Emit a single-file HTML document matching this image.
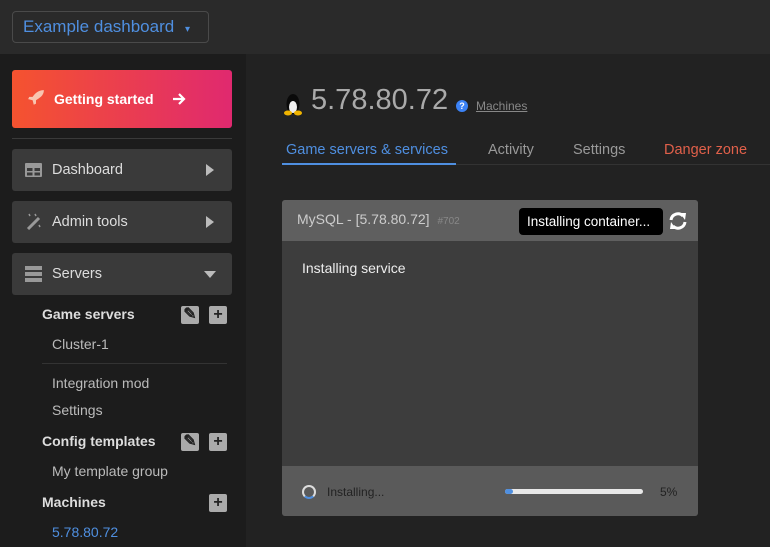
<!DOCTYPE html>
<html><head><style>
*{box-sizing:border-box;margin:0;padding:0}
body{width:770px;height:547px;overflow:hidden;background:#222;font-family:"Liberation Sans",sans-serif;position:relative;color:#ddd}
.abs{position:absolute}
.top{left:0;top:0;width:770px;height:54px;background:#2a2a2a}
.dd{left:12px;top:11px;width:197px;height:32px;border:1px solid #4a4a4a;border-radius:4px;color:#4f8fe0;font-size:17px;line-height:30px;padding-left:10px}
.side{left:0;top:54px;width:246px;height:493px;background:#1c1c1c}
.gs{left:12px;top:70px;width:220px;height:58px;border-radius:3px;background:linear-gradient(90deg,#f5532f,#e0296f);color:#fff;font-weight:bold;font-size:14px;line-height:58px;padding-left:42px}
.hr{left:12px;top:138px;width:220px;height:1px;background:#3a3a3a}
.nav{left:12px;width:220px;height:42px;background:#3a3a3a;border-radius:3px;font-size:14.5px;color:#ddd;line-height:42px;padding-left:40px}
.tri{position:absolute;right:18px;top:15px;width:0;height:0;border-top:6px solid transparent;border-bottom:6px solid transparent;border-left:8px solid #bbb}
.trid{position:absolute;right:16px;top:18px;border-left:6px solid transparent;border-right:6px solid transparent;border-top:7px solid #bbb}
.h{left:42px;font-weight:bold;font-size:14px;color:#ddd}
.i{left:52px;font-size:14px;color:#bbb}
.btn{width:18px;height:18px;background:#aaa;border-radius:2px;color:#222;font-weight:bold;text-align:center;line-height:18px;font-size:16px}
.tab{top:142px;font-size:14.5px;color:#999}
</style></head><body>
<div class="abs top"></div>
<div class="abs dd">Example dashboard <span style="font-size:10px;margin-left:6px">▾</span></div>
<div class="abs side"></div>
<div class="abs gs">Getting started</div>
<svg class="abs" style="left:172px;top:92px" width="14" height="14" viewBox="0 0 14 14"><path d="M1 7H12M7 2L12 7 7 12" stroke="#fff" stroke-width="2.2" fill="none"/></svg>
<svg class="abs" style="left:27px;top:89px" width="18" height="18" viewBox="0 0 16 16"><path d="M15 1C10 1 7 4 5 7L2 7 1 9 5 10 6 14 8 13 8 10C11 8 15 6 15 1Z" fill="#f8c5b0"/></svg>
<div class="abs hr"></div>
<div class="abs nav" style="top:149px">Dashboard<div class="tri"></div></div>
<svg class="abs" style="left:25px;top:163px" width="17" height="14"><rect width="17" height="14" rx="1" fill="#999"/><rect x="2" y="5" width="5.5" height="3" fill="#3a3a3a"/><rect x="9.5" y="5" width="5.5" height="3" fill="#3a3a3a"/><rect x="2" y="9.5" width="5.5" height="3" fill="#3a3a3a"/><rect x="9.5" y="9.5" width="5.5" height="3" fill="#3a3a3a"/></svg>
<div class="abs nav" style="top:201px">Admin tools<div class="tri"></div></div>
<svg class="abs" style="left:25px;top:213px" width="17" height="17"><path d="M3 16L14 5" stroke="#999" stroke-width="3"/><path d="M4 1l1 2M14 12l1 2M10 1l1 2" stroke="#999" stroke-width="1.5"/></svg>
<div class="abs nav" style="top:253px">Servers<div class="trid"></div></div>
<svg class="abs" style="left:25px;top:266px" width="17" height="16"><rect width="17" height="4" fill="#999"/><rect y="6" width="17" height="4" fill="#999"/><rect y="12" width="17" height="4" fill="#999"/></svg>
<div class="abs h" style="top:306px">Game servers</div>
<div class="abs btn" style="left:181px;top:306px">✎</div><div class="abs btn" style="left:209px;top:306px">+</div>
<div class="abs i" style="top:336px">Cluster-1</div>
<div class="abs" style="left:42px;top:363px;width:185px;height:1px;background:#333"></div>
<div class="abs i" style="top:375px">Integration mod</div>
<div class="abs i" style="top:402px">Settings</div>
<div class="abs h" style="top:433px">Config templates</div>
<div class="abs btn" style="left:181px;top:433px">✎</div><div class="abs btn" style="left:209px;top:433px">+</div>
<div class="abs i" style="top:463px">My template group</div>
<div class="abs h" style="top:494px">Machines</div>
<div class="abs btn" style="left:209px;top:494px">+</div>
<div class="abs i" style="top:524px;color:#4f8fe0">5.78.80.72</div>
<svg class="abs" style="left:283px;top:92px" width="20" height="24"><ellipse cx="10" cy="12" rx="6.5" ry="10" fill="#0a0a0a"/><ellipse cx="10" cy="15" rx="4" ry="6" fill="#eee"/><ellipse cx="5" cy="21" rx="4" ry="2.5" fill="#f0b400"/><ellipse cx="15" cy="21" rx="4" ry="2.5" fill="#f0b400"/></svg>
<div class="abs" style="left:311px;top:84px;font-size:29px;color:#aaa">5.78.80.72</div>
<div class="abs" style="left:456px;top:100px;width:12px;height:12px;border-radius:50%;background:#3b82f6;color:#fff;font-size:9px;text-align:center;line-height:12px;font-weight:bold">?</div>
<div class="abs" style="left:476px;top:99px;font-size:12px;color:#888;text-decoration:underline">Machines</div>
<div class="abs" style="left:283px;top:164px;width:487px;height:1px;background:#333"></div>
<div class="abs tab" style="left:286px;color:#4f8fe0">Game servers &amp; services</div>
<div class="abs" style="left:282px;top:163px;width:174px;height:2px;background:#4f8fe0"></div>
<div class="abs tab" style="left:488px">Activity</div>
<div class="abs tab" style="left:573px">Settings</div>
<div class="abs tab" style="left:664px;color:#e0604a">Danger zone</div>
<div class="abs" style="left:282px;top:200px;width:416px;height:316px;background:#3d3d3d;border-radius:3px;overflow:hidden">
<div style="height:41px;background:#5f5f5f;padding-left:15px;line-height:39px;font-size:14px;color:#ccc">MySQL - [5.78.80.72] <span style="font-size:10px;color:#888;margin-left:4px">#702</span></div>
<div style="padding:19px 20px;font-size:14px;color:#eee">Installing service</div>
<div style="position:absolute;left:0;top:266px;width:416px;height:50px;background:#5a5a5a"></div>
</div>
<div class="abs" style="left:519px;top:208px;width:144px;height:27px;background:#000;border-radius:4px;color:#fff;font-size:13.5px;line-height:27px;padding-left:8px">Installing container...</div>
<svg class="abs" style="left:668px;top:211px" width="20" height="20" viewBox="0 0 20 20"><path d="M3 9A7 7 0 0 1 15 5" stroke="#fff" stroke-width="3" fill="none"/><path d="M12 2L18 2 17 9Z" fill="#fff"/><path d="M17 11A7 7 0 0 1 5 15" stroke="#fff" stroke-width="3" fill="none"/><path d="M8 18L2 18 3 11Z" fill="#fff"/></svg>
<div class="abs" style="left:302px;top:485px;width:14px;height:14px;border-radius:50%;border:2px solid #ddd;border-bottom-color:#4f8fe0"></div>
<div class="abs" style="left:327px;top:485px;font-size:12px;color:#222">Installing...</div>
<div class="abs" style="left:505px;top:489px;width:138px;height:5px;border-radius:3px;background:#e8e8e8"><div style="width:8px;height:5px;background:#4f8fe0;border-radius:3px"></div></div>
<div class="abs" style="left:660px;top:485px;font-size:12px;color:#222">5%</div>
</body></html>
